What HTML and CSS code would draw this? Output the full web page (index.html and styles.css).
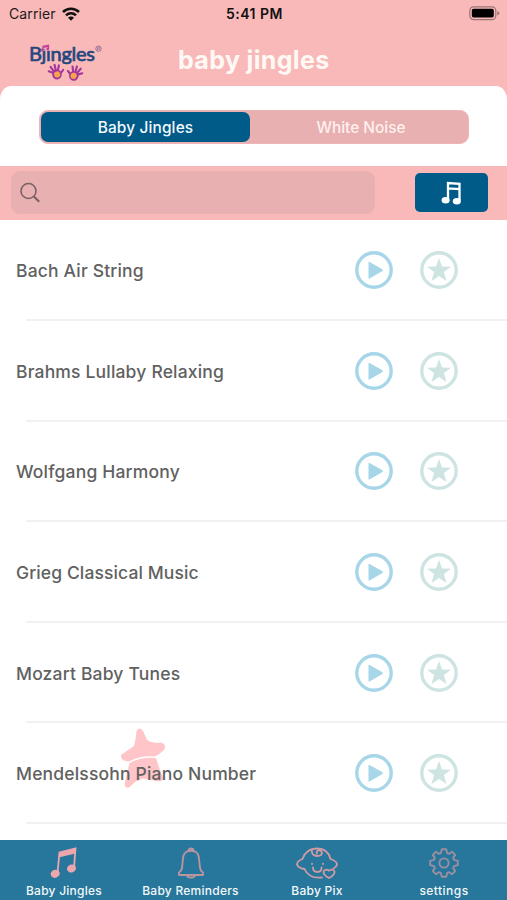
FILE: index.html
```html
<!DOCTYPE html>
<html lang="en">
<head>
<meta charset="utf-8">
<meta name="viewport" content="width=device-width, initial-scale=1">
<title>baby jingles</title>
<link rel="stylesheet" href="styles.css">
</head>
<body>
<svg class="defs" aria-hidden="true">
  <symbol id="play" viewBox="0 0 38 38"><circle cx="19" cy="19" r="17.200" fill="none" stroke="currentColor" stroke-width="3.400"/><path d="M13.500 11.500v15.500q0 1 1 .6l13-7.500q1-.9 0-1.800l-13-7.400q-1-.4-1 .6z" fill="currentColor"/></symbol>
  <symbol id="star" viewBox="0 0 38 38"><circle cx="19" cy="19" r="17.200" fill="none" stroke="currentColor" stroke-width="3.400"/><path d="M19 7l3 8.400 9 .3-7.100 5.400 2.600 8.900-7.500-5-7.500 5 2.600-8.900-7.100-5.400 9-.3z" fill="currentColor"/></symbol>
  <symbol id="hand" viewBox="0 0 16 16"><g fill="none" stroke="#a3379c" stroke-width="2" stroke-linecap="round"><path d="M6 9L1.200 6.500M6.500 8L3.500 2.500M8 7.500L7.500 1.200M9.500 8L11.500 2.200M10.500 11L15 7"/></g><ellipse cx="8.500" cy="10.500" rx="4.500" ry="4.700" fill="#a3379c"/><circle cx="8.700" cy="10.500" r="2.900" fill="#f6a34a"/></symbol>
</svg>
<div class="app">
  <header class="header">
    <div class="status">
      <div class="carrier"><span>Carrier</span>
        <svg width="18" height="14" viewBox="0 0 18 14"><g fill="none" stroke="#111" stroke-width="2.500"><path d="M1 5a11.400 11.400 0 0 1 16 0M4 8.300a7.200 7.200 0 0 1 10 0"/></g><path d="M9 13.800L6 10.700a4.200 4.200 0 0 1 6 0z" fill="#111"/></svg>
      </div>
      <div class="time">5:41 PM</div>
      <svg class="battery" width="31" height="15" viewBox="0 0 31 15"><rect x=".8" y=".8" width="26" height="12.800" rx="3.800" fill="none" stroke="#9c7576" stroke-width="1.200"/><rect x="2.800" y="2.800" width="22" height="8.800" rx="1.800" fill="#000"/><path d="M28.300 5q2 .8 2 2.200t-2 2.200z" fill="#9c7576"/></svg>
    </div>
    <div class="brand">
      <svg class="logo" width="76" height="40" viewBox="0 0 76 40">
        <text x="-1" y="17" class="logo-text" textLength="66" lengthAdjust="spacing">Bjıngles</text>
        <rect x="11" y="0" width="7" height="5.300" fill="#f9b9b9"/>
        <path d="M13 6V2.300l5.500-1V5M13 3.300l5.500-1" fill="none" stroke="#c2419c" stroke-width="1.300"/><circle cx="12.200" cy="6" r="1.400" fill="#c2419c"/><circle cx="17.700" cy="5" r="1.400" fill="#c2419c"/>
        <circle cx="68.500" cy="4.700" r="2.700" fill="none" stroke="#8c6c91" stroke-width=".9"/><path d="M67.500 6.400V3.200h1.300q1 0 1 .9t-1 .9h-1.300m1.300 0l1 1.400" fill="none" stroke="#8c6c91" stroke-width=".7"/>
        <use href="#hand" width="17" height="17" transform="translate(17.500 19.500) rotate(-8 8 8)"/>
        <use href="#hand" width="17" height="17" transform="translate(53.500 21) scale(-1 1) rotate(-12 8 8)"/>
      </svg>
      <h1>baby jingles</h1>
    </div>
  </header>
  <section class="panel">
    <div class="segments"><button class="segment active">Baby Jingles</button><button class="segment">White Noise</button></div>
  </section>
  <div class="search">
    <div class="field"><svg width="22" height="22" viewBox="0 0 22 22" fill="none" stroke="#7b6264"><circle cx="8.500" cy="9" r="7.500" stroke-width="1.600"/><path d="M13.700 14.300l5.500 5.500" stroke-width="2.100"/></svg></div>
    <button class="filter"><svg width="22" height="24" viewBox="0 0 22 24"><path d="M7 19V2l11.500.8V19.500M7 7.300l11.500.8" fill="none" stroke="#fff" stroke-width="2.300"/><ellipse cx="4.600" cy="19.300" rx="4" ry="3.200" fill="#fff"/><ellipse cx="15.800" cy="20.200" rx="4" ry="3.200" fill="#fff"/></svg></button>
  </div>
  <main class="list">
    <div class="row"><span class="name">Bach Air String</span><svg class="play"><use href="#play"/></svg><svg class="star"><use href="#star"/></svg></div>
    <div class="row"><span class="name">Brahms Lullaby Relaxing</span><svg class="play"><use href="#play"/></svg><svg class="star"><use href="#star"/></svg></div>
    <div class="row"><span class="name">Wolfgang Harmony</span><svg class="play"><use href="#play"/></svg><svg class="star"><use href="#star"/></svg></div>
    <div class="row"><span class="name tight">Grieg Classical Music</span><svg class="play"><use href="#play"/></svg><svg class="star"><use href="#star"/></svg></div>
    <div class="row"><span class="name">Mozart Baby Tunes</span><svg class="play"><use href="#play"/></svg><svg class="star"><use href="#star"/></svg></div>
    <div class="row"><svg class="starfish" width="48" height="64" viewBox="0 0 48 64"><path d="M17.500 4Q20.500-1 24 4L28 13Q34 17 42 15.500 48 17 45 23 41 27 36 29.500 22 28 10 34.500 1 34 2 28L15 19Q17 12 17.500 4zM10.500 36Q21 30 37 31L39.500 39Q43 48 44.500 52 43 55 37 54L24 51.500 16 55 10 60.500Q5 62 6 55z" fill="#ffc5c8"/></svg><span class="name">Mendelssohn Piano Number</span><svg class="play"><use href="#play"/></svg><svg class="star"><use href="#star"/></svg></div>
  </main>
  <nav class="tabs">
    <a class="tab"><svg width="28" height="32" viewBox="0 0 28 32"><path d="M7.500 26L9.500 5.500 25.500 1.500 24 21" fill="none" stroke="#eda6ad" stroke-width="1.800"/><path d="M9 5.500l17-4.200-.5 5.200-17 4z" fill="#eda6ad"/><ellipse cx="5.200" cy="26.800" rx="4.600" ry="4" transform="rotate(-20 5.200 26.800)" fill="#eda6ad"/><ellipse cx="21.500" cy="21.500" rx="4.600" ry="4" transform="rotate(-20 21.500 21.500)" fill="#eda6ad"/></svg><span>Baby Jingles</span></a>
    <a class="tab"><svg width="28" height="32" viewBox="0 0 28 32" fill="none" stroke="#b9959f" stroke-width="1.900" stroke-linejoin="round"><path d="M11.500 4Q11.500 1.500 14 1.500T16.500 4M10 4.500q4-1.500 8 0 3.700 2 4 7L23 21q.5 3 3 4.500V28H2v-2.500Q4.500 24 5 21L6 11.500q.3-5 4-7zM10 28q0 2.500 4 2.500t4-2.500"/></svg><span>Baby Reminders</span></a>
    <a class="tab"><svg width="44" height="32" viewBox="0 0 44 32" fill="none" stroke="#cf9ba6" stroke-width="1.800" stroke-linecap="round" stroke-linejoin="round"><path d="M27 30.500Q14 32 9.500 22 3 21 2 17.500 2 14 7.500 12 11 1.500 22 1.500T35.500 12Q42 14 42 17.500 41.500 20 38.500 21.500M17 2.500q-1 6 5 6.500 5 0 5-3.500-1-3-4-2-2 1-1 3M18 20.500q0 4.500 4.300 4.500t4.300-4.500M17 17v-.3M28 17v-.3"/><path d="M34 31q-6.500-3.500-5.200-7 2-2.500 5.200-.3 3.200-2.200 5.400.3 1 3.500-5.400 7z"/></svg><span>Baby Pix</span></a>
    <a class="tab"><svg width="32" height="32" viewBox="-16 -16 32 32" fill="none" stroke="#9b8f9f" stroke-width="1.900" stroke-linejoin="round"><path d="M-2.200-13.800H2.200L3.200-10 5.100-9.200 8.100-11.200 11.200-8.100 9.200-5.100 10-3.200 13.800-2.200V2.200L10 3.200 9.200 5.100 11.200 8.100 8.100 11.200 5.100 9.200 3.200 10 2.200 13.800H-2.200L-3.200 10-5.100 9.200-8.100 11.200-11.200 8.100-9.200 5.100-10 3.200-13.800 2.200V-2.200L-10-3.200-9.200-5.100-11.200-8.100-8.100-11.200-5.100-9.200-3.200-10z"/><circle r="4.600"/></svg><span class="wide">settings</span></a>
  </nav>
</div>
</body>
</html>
```
FILE: styles.css
```css
* { box-sizing: border-box; }
body { margin: 0; font-family: Inter, "Liberation Sans", sans-serif; background: #fff; }
button { border: 0; padding: 0; font: inherit; }
svg { display: block; flex: none; }
.defs { position: absolute; width: 0; height: 0; }
.app { width: 507px; height: 900px; display: flex; flex-direction: column; overflow: hidden; background: #fff; }
.header { flex: 0 0 86px; background: #f9b9b9; }
.status { height: 27px; padding: 0 7px 0 9px; display: grid; grid-template-columns: 1fr auto 1fr; align-items: center; color: #241a1b; font-size: 14px; }
.carrier { display: flex; align-items: center; gap: 6px; letter-spacing: .1px; }
.time { font-weight: 600; font-size: 14px; letter-spacing: .5px; color: #111; }
.battery { justify-self: end; margin-top: -1px; }
.brand { height: 59px; display: grid; grid-template-columns: 178px auto; }
.logo { margin: 17px 0 0 30px; overflow: visible; }
.logo-text { font: 400 20px Lato, Inter, sans-serif; fill: #25477f; stroke: #25477f; stroke-width: .7px; }
h1 { margin: 16px 0 0; font-size: 25px; line-height: 34px; font-weight: 700; letter-spacing: .35px; color: #fff9f5; }
.panel { flex: 0 0 80px; background: linear-gradient(#f9b9b9 0 18px, #fff 18px); }
.panel::before { content: ""; display: block; height: 24px; background: #fff; border-radius: 11px 11px 0 0 / 14px 14px 0 0; }
.segments { width: 430px; height: 34px; margin-left: 39px; padding: 1px; display: grid; grid-template-columns: 209px 1fr; border: 1px solid #f0b4b6; border-radius: 9px; background: #e9b0b2; }
.segment { padding: 0 0 0 5px; background: none; color: #fff0ee; font-size: 15.4px; font-weight: 500; border-radius: 7px; }
.segment.active { padding-left: 0; background: #005b89; color: #f4faff; letter-spacing: .15px; }
.search { flex: 0 0 53.5px; padding: 0 19px 0 11px; display: flex; justify-content: space-between; align-items: center; background: #f9b9b9; }
.field { width: 364px; height: 43px; display: flex; align-items: center; padding-left: 9px; border-radius: 9px; background: #e9b0b2; }
.filter { width: 73px; height: 39px; display: grid; place-items: center; border-radius: 5px; background: #005b89; }
.list { flex: 0 0 620.5px; }
.row { position: relative; height: 100.6px; padding: 0 49px 0 16px; display: flex; align-items: center; gap: 27px; }
.row::after { content: ""; position: absolute; left: 26px; right: 0; bottom: -1px; height: 2px; background: #f1f1f2; }
.name { position: relative; flex: 1; font-size: 17.5px; letter-spacing: .18px; color: #616161; font-weight: 450; white-space: nowrap; padding-top: 2px; }
.name.tight { letter-spacing: .11px; }
.play, .star { width: 38px; height: 38px; margin-top: 1px; }
.play { color: #a6d6e8; }
.star { color: #cde4e2; }
.starfish { position: absolute; left: 119px; top: 5px; }
.tabs { flex: 0 0 60px; display: grid; grid-template-columns: 128px 125px 128px 126px; background: #27769b; }
.tab { display: flex; flex-direction: column; align-items: center; padding-top: 7px; color: #f3f8fa; font-size: 12px; font-weight: 500; line-height: 16px; gap: 4px; letter-spacing: .25px; }
.tab span { white-space: nowrap; }
.tab .wide { letter-spacing: .45px; }
```
